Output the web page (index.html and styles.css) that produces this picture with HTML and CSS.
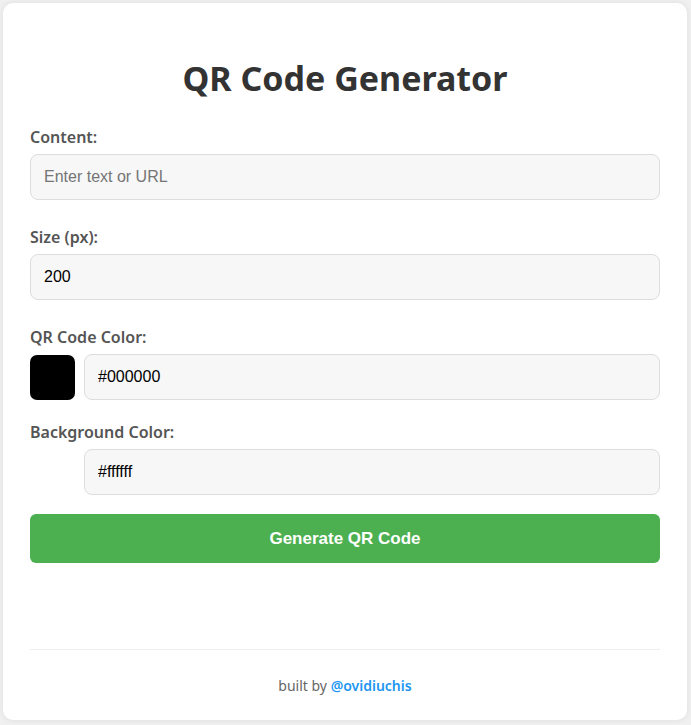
FILE: index.html
```html
<!DOCTYPE html>
<html>
<head>
<meta charset="utf-8">
<link rel="stylesheet" href="styles.css">
</head>
<body>
<div class="card">
  <h1 class="title">QR Code Generator</h1>
  <div class="group">
    <label class="label">Content:</label>
    <input class="field" type="text" placeholder="Enter text or URL">
  </div>
  <div class="group">
    <label class="label">Size (px):</label>
    <input class="field" type="text" value="200">
  </div>
  <div class="group group-color">
    <label class="label">QR Code Color:</label>
    <div class="color-row">
      <span class="swatch swatch-black"></span>
      <input class="field" type="text" value="#000000">
    </div>
  </div>
  <div class="group group-color group-last">
    <label class="label">Background Color:</label>
    <div class="color-row">
      <span class="swatch swatch-white"></span>
      <input class="field" type="text" value="#ffffff">
    </div>
  </div>
  <button class="btn">Generate QR Code</button>
  <div class="result"></div>
  <footer class="footer">built by <a class="link">@ovidiuchis</a></footer>
</div>
</body>
</html>
```
FILE: styles.css
```css
html, body {
  margin: 0;
  padding: 0;
}
body {
  background: #f0f0f0;
  padding: 3px 4px 5px 3px;
  font-family: "Noto Sans", sans-serif;
}
.card {
  background: #fff;
  border-radius: 10px;
  box-shadow: 0 0 6px rgba(0,0,0,0.08);
  padding: 1px 27px 0 27px;
  height: 717px;
  box-sizing: border-box;
}
.title {
  text-align: center;
  color: #333;
  font-size: 34px;
  font-weight: 700;
  margin: 50px 0 25px;
  line-height: 48px;
}
.group {
  margin-bottom: 27px;
}
.group-color {
  margin-bottom: 22px;
}
.group-last {
  margin-bottom: 19px;
}
.label {
  display: block;
  color: #555;
  font-weight: 600;
  font-size: 16px;
  line-height: 20px;
  margin-bottom: 7px;
}
.field {
  display: block;
  width: 100%;
  box-sizing: border-box;
  height: 46px;
  padding: 0 13px;
  border: 1px solid #ddd;
  border-radius: 8px;
  background: #f7f7f7;
  font-family: "Liberation Sans", Arial, sans-serif;
  font-size: 16px;
  color: #000;
  outline: none;
}
.field::placeholder {
  color: #757575;
}
.color-row {
  display: flex;
  align-items: flex-end;
  gap: 9px;
}
.color-row .field {
  flex: 1;
}
.swatch {
  flex: 0 0 45px;
  width: 45px;
  height: 45px;
  border-radius: 7px;
}
.swatch-black { background: #000; }
.swatch-white { background: #fff; }
.btn {
  display: block;
  width: 100%;
  height: 49px;
  border: none;
  border-radius: 6px;
  background: #4caf50;
  color: #fff;
  font-family: "Liberation Sans", Arial, sans-serif;
  font-weight: 700;
  font-size: 17px;
  margin: 0;
}
.result {
  height: 86px;
}
.footer {
  border-top: 1px solid #eee;
  text-align: center;
  color: #666;
  font-size: 14px;
  line-height: 19px;
  padding-top: 26px;
}
.link {
  color: #2196f3;
  font-weight: 600;
  text-decoration: none;
}
```
